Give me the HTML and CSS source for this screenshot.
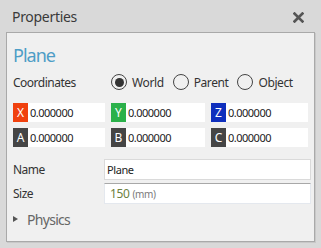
FILE: index.html
```html
<!DOCTYPE html>
<html>
<head>
<meta charset="utf-8">
<link rel="stylesheet" href="styles.css">
</head>
<body>
<div class="dialog">
  <div class="titlebar">
    <span class="title">Properties</span>
    <svg class="close" width="11" height="11" viewBox="0 0 11 11"><path d="M1.6 1.6 L9.4 9.4 M9.4 1.6 L1.6 9.4" stroke="#555" stroke-width="2.7" stroke-linecap="square"/></svg>
  </div>
  <div class="panel">
    <div class="heading">Plane</div>
    <div class="coord-row">
      <span class="label">Coordinates</span>
      <div class="radios">
        <span class="radio checked"><span class="circle"></span>World</span>
        <span class="radio"><span class="circle"></span>Parent</span>
        <span class="radio"><span class="circle"></span>Object</span>
      </div>
    </div>
    <div class="grid">
      <div class="field"><span class="badge bx">X</span><span class="val">0.000000</span></div>
      <div class="field"><span class="badge by">Y</span><span class="val">0.000000</span></div>
      <div class="field"><span class="badge bz">Z</span><span class="val">0.000000</span></div>
      <div class="field"><span class="badge bd">A</span><span class="val">0.000000</span></div>
      <div class="field"><span class="badge bd">B</span><span class="val">0.000000</span></div>
      <div class="field"><span class="badge bd">C</span><span class="val">0.000000</span></div>
    </div>
    <div class="prop-row first">
      <span class="label">Name</span>
      <div class="input">Plane</div>
    </div>
    <div class="prop-row">
      <span class="label">Size</span>
      <div class="input size"><span class="num">150</span><span class="unit">(mm)</span></div>
    </div>
    <div class="physics"><span class="tri"></span>Physics</div>
  </div>
</div>
</body>
</html>
```
FILE: styles.css
```css
* { box-sizing: border-box; }
body {
  margin: 0;
  background: #d9d9d9;
  font-family: "Noto Sans", "Open Sans", sans-serif;
  color: #333;
  width: 321px;
  height: 248px;
  overflow: hidden;
}
.titlebar {
  height: 32px;
  display: flex;
  align-items: center;
  justify-content: space-between;
  padding: 1px 17px 0 12px;
}
.title {
  font-size: 14px;
  letter-spacing: -0.3px;
  color: #3a3a3a;
}
.close { display: block; margin-top: 2px; }
.panel {
  margin-left: 6px;
  width: 309px;
  height: 210px;
  background: #f0f0f0;
  border: 1px solid #a9a9a9;
  box-shadow: 1px 1px 0 #c8c8c8;
  padding: 0 0 0 6px;
}
.heading {
  font-size: 18px;
  letter-spacing: -1px;
  color: #4d9dc6;
  height: 32px;
  padding-top: 12px;
  line-height: 20px;
}
.label {
  font-size: 12px;
  letter-spacing: -0.5px;
  color: #333;
}
.coord-row {
  display: flex;
  align-items: center;
  height: 22px;
  margin-top: 6px;
}
.coord-row .label { width: 98px; }
.radios { display: flex; gap: 9px; }
.radio {
  display: flex;
  align-items: center;
  font-size: 12px;
  letter-spacing: -0.4px;
  color: #333;
  gap: 5px;
}
.circle {
  width: 16px;
  height: 16px;
  border: 1.3px solid #444;
  border-radius: 50%;
  display: flex;
  align-items: center;
  justify-content: center;
}
.checked .circle::after {
  content: "";
  width: 9px;
  height: 9px;
  border-radius: 50%;
  background: #333;
}
.grid {
  display: grid;
  grid-template-columns: 92px 94px 97px;
  column-gap: 6px;
  row-gap: 6px;
  margin-top: 10px;
}
.field {
  display: flex;
  align-items: center;
  height: 19px;
  background: #fff;
}
.badge {
  width: 15px;
  height: 19px;
  color: #fff;
  font-size: 12px;
  display: flex;
  align-items: center;
  justify-content: center;
}
.bx { background: #f0410e; }
.by { background: #2bb14a; }
.bz { background: #0f2fbd; }
.bd { background: #454545; }
.val {
  font-size: 11px;
  letter-spacing: -0.5px;
  color: #222;
  margin-left: 2px;
}
.prop-row {
  display: flex;
  align-items: center;
  height: 21px;
  margin-top: 3px;
}
.prop-row.first { margin-top: 12px; }
.prop-row .label { width: 91px; }
.input {
  width: 207px;
  height: 21px;
  background: #fff;
  border: 1px solid #dadada;
  font-size: 11px;
  letter-spacing: -0.4px;
  color: #222;
  display: flex;
  align-items: center;
  padding-left: 2px;
}
.input.size {
  border-color: #a8a8a8 #e4e8ee #e4e8ee #e4e8ee;
  padding-left: 5px;
}
.num { color: #6c8040; font-size: 12px; }
.unit { color: #7a7a7a; font-size: 10px; margin-left: 3px; }
.physics {
  display: flex;
  align-items: center;
  font-size: 14px;
  letter-spacing: -0.7px;
  color: #666;
  margin-top: 5px;
  height: 20px;
}
.tri {
  width: 0;
  height: 0;
  border-left: 5px solid #555;
  border-top: 3.5px solid transparent;
  border-bottom: 3.5px solid transparent;
  margin: 0 9px 0 0;
}
```
